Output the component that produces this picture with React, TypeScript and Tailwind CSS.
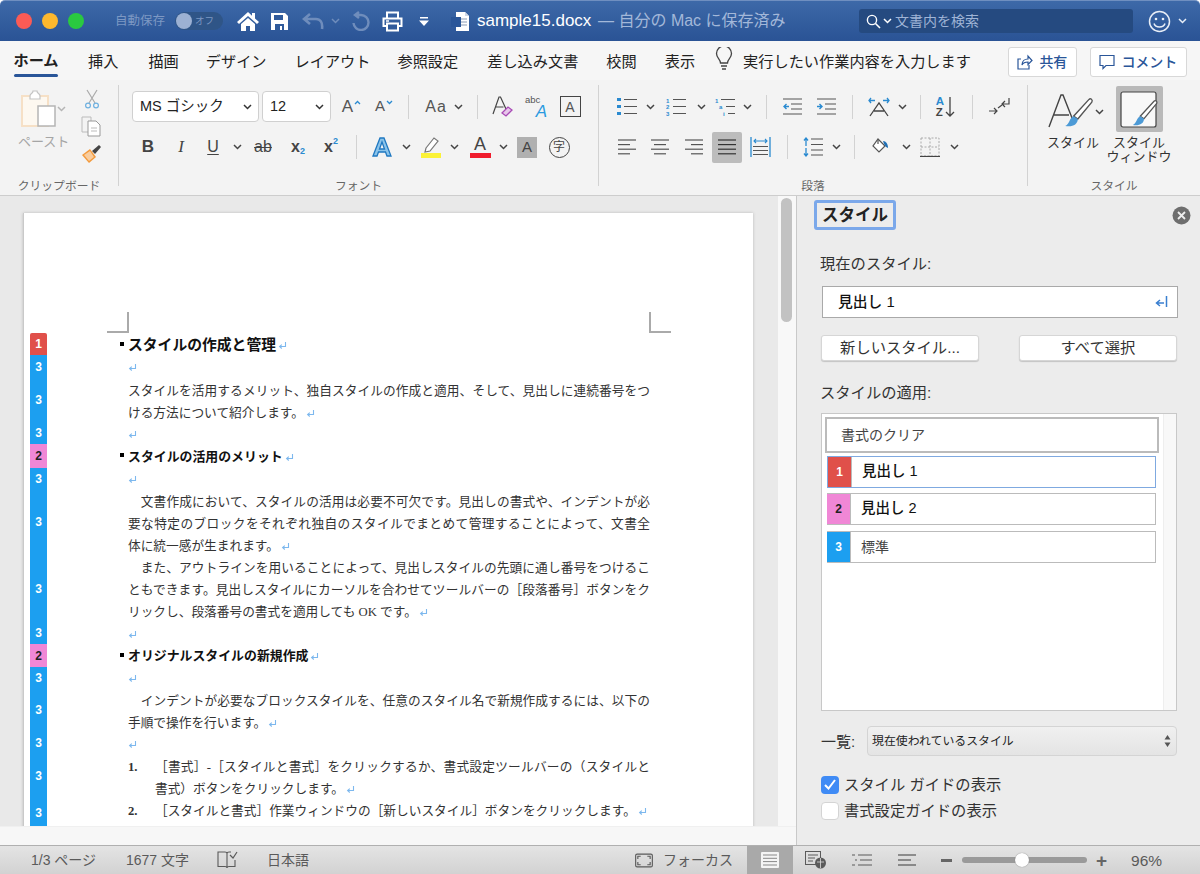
import React from 'react';

const Chev = ({ c = '#444' }: { c?: string }) => (
  <svg width="9" height="6" viewBox="0 0 9 6" className="shrink-0">
    <path d="M1 1l3.5 3.5L8 1" stroke={c} strokeWidth="1.5" fill="none" />
  </svg>
);

// horizontal rule icon used by the list and align buttons
const Lines = ({ rows, w = 20, h = 18, c = '#555' }: { rows: [number, number, number][]; w?: number; h?: number; c?: string }) => (
  <svg width={w} height={h} viewBox={`0 0 ${w} ${h}`} className="shrink-0">
    {rows.map((r, i) => (
      <path key={i} d={`M${r[0]} ${r[2]}H${r[1]}`} stroke={c} strokeWidth="1.2" />
    ))}
  </svg>
);

const Slot = ({ className, children }: { className: string; children?: React.ReactNode }) => (
  <div className={`flex shrink-0 items-center justify-center ${className}`}>{children}</div>
);

const VLine = ({ className = 'h-[24px]' }: { className?: string }) => <div className={`w-px bg-[#d2d2d2] ${className}`} />;

const Brush = ({ x = 0, y = 0, s = 1 }: { x?: number; y?: number; s?: number }) => (
  <g transform={`translate(${x} ${y}) scale(${s})`}>
    <path d="M20 1c1-1 3 0 2 2L12 15l-3-2z" fill="#fff" stroke="#555" strokeWidth="1" />
    <path d="M9 13l3 2c0 4-4 6-9 5 3-1 3-6 6-7z" fill="#4c9ad6" />
  </g>
);

const Mark = ({ c = '#7db8ee', className = 'ml-[2px]' }: { c?: string; className?: string }) => (
  <svg width="9" height="9" viewBox="0 0 9 9" className={`inline-block align-[-1px] ${className}`}>
    <path d="M7.5 1v4.5H2M3.8 3.6L1.6 5.5l2.2 2" stroke={c} strokeWidth="1.1" fill="none" />
  </svg>
);

const Caret = ({ down }: { down?: boolean }) => (
  <svg width="7" height="5" viewBox="0 0 7 5" className="mb-[9px] ml-px shrink-0">
    <path d={down ? 'M1 1l2.500 2.500L6 1' : 'M1 4l2.500-2.500L6 4'} stroke="#2a8ad0" strokeWidth="1.300" fill="none" />
  </svg>
);

const TitleBar = () => (
  <div className="flex h-[41px] shrink-0 items-center rounded-t-[5px] border-t border-[#6f8fc0] bg-gradient-to-b from-[#3d69a8] to-[#2a5395] text-white">
    <div className="ml-[16px] h-[16px] w-[16px] rounded-full bg-[#fb5b55]" />
    <div className="ml-[10px] h-[16px] w-[16px] rounded-full bg-[#fdb82e]" />
    <div className="ml-[10px] h-[16px] w-[16px] rounded-full bg-[#2ac940]" />
    <span className="ml-[31px] w-[60px] text-[12.5px] text-[#7d98c3]">自動保存</span>
    <div className="flex h-[18px] w-[48px] items-center rounded-full bg-[#2f5587] pl-px">
      <div className="h-[16px] w-[16px] rounded-full bg-[#9cb1d3]" />
      <span className="ml-[3px] text-[9.5px] text-[#7d98c3]">オフ</span>
    </div>
    <Slot className="ml-[14px] w-[22px]">
      <svg width="22" height="20" viewBox="0 0 22 20">
        <path d="M11 1L0 11l2 2 9-8 9 8 2-2-4-3.6V2h-3v2.7z" fill="#fff" />
        <path d="M4 13l7-6 7 6v7h-5v-5H9v5H4z" fill="#fff" />
      </svg>
    </Slot>
    <Slot className="ml-[11px] w-[19px]">
      <svg width="19" height="19" viewBox="0 0 19 19">
        <path d="M1 1h14l3 3v14H1z" fill="#fff" />
        <path d="M4 3h9v5H4z" fill="#2f5a9b" />
        <path d="M5 12h9v6H5z" fill="#2f5a9b" />
        <path d="M10 14h2v4h-2z" fill="#fff" />
      </svg>
    </Slot>
    <Slot className="ml-[13px] w-[23px]">
      <svg width="23" height="19" viewBox="0 0 23 19">
        <path d="M8 2L2 7l6 5M2 7h12c4 0 7 3 6 10" stroke="#6f8dbc" strokeWidth="2.6" fill="none" />
      </svg>
    </Slot>
    <Slot className="ml-[5px] w-[10px]">
      <Chev c="#6f8dbc" />
    </Slot>
    <Slot className="ml-[11px] w-[20px]">
      <svg width="20" height="20" viewBox="0 0 20 20">
        <path d="M8 1l-4 3 4 3M5 4h5a7.5 7.5 0 1 1-7.5 8" stroke="#6f8dbc" strokeWidth="2.4" fill="none" />
      </svg>
    </Slot>
    <Slot className="ml-[11px] w-[21px]">
      <svg width="21" height="21" viewBox="0 0 21 21">
        <path d="M5 7V1.5h11V7M5 15H1.5V7.5h18V15H16" stroke="#fff" strokeWidth="2" fill="none" />
        <path d="M5 12.5h11v7H5z" stroke="#fff" strokeWidth="2" fill="#2f5a9b" />
        <path d="M4 10h3" stroke="#fff" strokeWidth="1.5" />
      </svg>
    </Slot>
    <Slot className="ml-[16px] w-[10px]">
      <svg width="10" height="9" viewBox="0 0 10 9">
        <path d="M1 0h8v1.6H1zM0 3.5h10L5 9z" fill="#fff" />
      </svg>
    </Slot>
    <Slot className="ml-[22px] w-[19px]">
      <svg width="19" height="21" viewBox="0 0 19 21">
        <path d="M5 1h9l4 4v15H5z" fill="#fff" />
        <path d="M14 1v4h4" fill="#cfd8e6" />
        <path d="M10 8h6M10 11h6M10 14h6" stroke="#8a9bb5" strokeWidth="1" />
        <path d="M0 6h10v10H0z" fill="#2a5699" />
      </svg>
    </Slot>
    <span className="ml-[7px] w-[121px] text-[17px] text-white">sample15.docx</span>
    <span className="w-[261px] text-[16px] text-[#a3b8d9]">— 自分の Mac に保存済み</span>
    <div className="flex h-[24px] w-[274px] items-center rounded-[3px] bg-[#254a80] pl-[7px]">
      <svg width="15" height="15" viewBox="0 0 15 15">
        <circle cx="6" cy="6" r="4.6" stroke="#fff" strokeWidth="1.4" fill="none" />
        <path d="M9.5 9.5L14 14" stroke="#fff" strokeWidth="1.6" />
      </svg>
      <div className="ml-[2px]">
        <Chev c="#fff" />
      </div>
      <span className="ml-[3px] text-[14px] text-[#9fb4d6]">文書内を検索</span>
    </div>
    <Slot className="ml-[15px] w-[23px]">
      <svg width="23" height="23" viewBox="0 0 23 23">
        <circle cx="11.5" cy="11.5" r="10" stroke="#e8eef7" strokeWidth="1.5" fill="none" />
        <circle cx="8" cy="9" r="1.3" fill="#e8eef7" />
        <circle cx="15" cy="9" r="1.3" fill="#e8eef7" />
        <path d="M6 13.5c1.5 4.5 9.5 4.5 11 0" stroke="#e8eef7" strokeWidth="1.5" fill="none" />
      </svg>
    </Slot>
    <Slot className="ml-[6px] w-[10px]">
      <Chev c="#e8eef7" />
    </Slot>
  </div>
);

const tabs: [string, string][] = [
  ['挿入', 'ml-[30px]'],
  ['描画', 'ml-[30px]'],
  ['デザイン', 'ml-[27px]'],
  ['レイアウト', 'ml-[28px]'],
  ['参照設定', 'ml-[27px]'],
  ['差し込み文書', 'ml-[29px]'],
  ['校閲', 'ml-[28px]'],
  ['表示', 'ml-[28px]'],
];

const TabRow = () => (
  <div className="flex h-[39px] shrink-0 items-start bg-[#f6f6f6] text-[15.2px] text-[#222]">
    <div className="ml-[14px] flex h-[36px] w-[44px] flex-col items-center justify-between pt-[10px] font-bold">
      <span className="leading-[20px] whitespace-nowrap">ホーム</span>
      <div className="h-[3px] w-[44px] rounded-full bg-[#2a5699]" />
    </div>
    {tabs.map(([t, ml]) => (
      <span key={t} className={`${ml} pt-[11px] leading-[20px] whitespace-nowrap`}>
        {t}
      </span>
    ))}
    <Slot className="ml-[20px] mt-[6px] w-[18px]">
      <svg width="18" height="24" viewBox="0 0 18 24">
        <path d="M5.5 16c0-4-4-5-4-9.500a7.500 7.500 0 0 1 15 0c0 4.500-4 5.500-4 9.500zM6 19h6M7 22h4" stroke="#444" strokeWidth="1.300" fill="none" />
      </svg>
    </Slot>
    <span className="ml-[10px] pt-[11px] leading-[20px] whitespace-nowrap">実行したい作業内容を入力します</span>
    <div className="ml-[37px] mt-[6px] flex h-[30px] w-[69px] items-center justify-center gap-[6px] rounded-[3px] border border-[#d8d8d8] bg-white text-[14px] font-medium text-[#2a5699]">
      <svg width="16" height="16" viewBox="0 0 16 16">
        <path d="M4 5H1v10h11v-4" stroke="#2a5699" strokeWidth="1.200" fill="none" />
        <path d="M5 11c0-4 3-6 6-6V2l4 4.500-4 4V8c-3 0-5 1-6 3z" stroke="#2a5699" strokeWidth="1.200" fill="none" />
      </svg>
      共有
    </div>
    <div className="ml-[13px] mt-[6px] flex h-[30px] w-[97px] items-center justify-center gap-[6px] rounded-[3px] border border-[#d8d8d8] bg-white text-[14px] font-medium text-[#2a5699]">
      <svg width="16" height="16" viewBox="0 0 16 16">
        <path d="M1 1.500h14v10H7l-3 3v-3H1z" stroke="#2a5699" strokeWidth="1.200" fill="none" />
      </svg>
      コメント
    </div>
  </div>
);

const Group = ({ className, label, children }: { className: string; label: string; children: React.ReactNode }) => (
  <div className={`mt-[5px] flex h-[101px] shrink-0 flex-col ${className}`}>
    <div className="h-[93px] shrink-0">{children}</div>
    <div className="h-[14px] shrink-0 pt-px text-center text-[11.800px] leading-[14px] text-[#666]">{label}</div>
  </div>
);

const FontSelect = ({ text, className }: { text: string; className: string }) => (
  <div className={`flex h-[31px] items-center justify-between rounded-[4px] border border-[#d0d0d0] bg-white pl-[7px] pr-[6px] text-[14.5px] text-[#222] ${className}`}>
    <span>{text}</span>
    <Chev c="#333" />
  </div>
);

const Clipboard = () => (
  <Group className="w-[119px] border-r border-[#d2d2d2]" label="クリップボード">
    <div className="flex pl-[20px] pt-[5px]">
      <div className="flex w-[56px] flex-col">
        <div className="flex items-center">
          <svg width="37" height="38" viewBox="0 0 37 38">
            <path d="M2 6h26v30H2z" fill="#fdf8f0" stroke="#f6e0c6" strokeWidth="2" />
            <path d="M10 6c0-3 3-2 3-5h4c0 3 3 2 3 5v3H10z" fill="#fff" stroke="#c4c4c4" strokeWidth="1.200" />
            <path d="M18 16h17v20H18z" fill="#fff" stroke="#b5b5b5" strokeWidth="1.500" />
          </svg>
          <Chev c="#b5b5b5" />
        </div>
        <span className="ml-[-2px] mt-[7px] text-[13px] leading-[14px] text-[#a5a5a5] whitespace-nowrap">ペースト</span>
      </div>
      <div className="ml-[5px] mt-[-1px] flex flex-col items-center gap-[7px]">
        <svg width="14" height="20" viewBox="0 0 14 20">
          <path d="M2 1l8 13M12 1L4 14" stroke="#aaa" strokeWidth="1.200" />
          <circle cx="3" cy="16.500" r="2.400" stroke="#6fb1e0" fill="none" strokeWidth="1.200" />
          <circle cx="11" cy="16.500" r="2.400" stroke="#6fb1e0" fill="none" strokeWidth="1.200" />
        </svg>
        <svg width="21" height="21" viewBox="0 0 21 21">
          <path d="M1 1h9v15H1z" stroke="#bbb" fill="none" />
          <path d="M7 5h8l4 4v11H7z" stroke="#999" fill="#fff" />
          <path d="M10 12h6M10 15h6" stroke="#bbb" />
        </svg>
        <svg width="21" height="20" viewBox="0 0 21 20">
          <path d="M1 11l8-6 6 8-7 6z" fill="#f39a3c" />
          <path d="M3 11l6-4 4 6-5 4z" fill="#fff" opacity="0.500" />
          <path d="M11 7l7-6 2 2-6 7z" fill="#444" />
        </svg>
      </div>
    </div>
  </Group>
);

const FontGroup = () => (
  <Group className="w-[480px] border-r border-[#d2d2d2]" label="フォント">
    <div className="mt-[6px] flex h-[31px] items-center pl-[13px] text-[#555]">
      <FontSelect text="MS ゴシック" className="w-[127px]" />
      <FontSelect text="12" className="ml-[3px] w-[69px]" />
      <Slot className="w-[41px] text-[17px]">
        A
        <Caret />
      </Slot>
      <Slot className="w-[24px] text-[15px]">
        A
        <Caret down />
      </Slot>
      <Slot className="w-[24px]">
        <VLine />
      </Slot>
      <Slot className="w-[32px] text-[16px] tracking-[1px]">Aa</Slot>
      <Slot className="w-[12px]">
        <Chev />
      </Slot>
      <Slot className="w-[26px]">
        <VLine />
      </Slot>
      <Slot className="w-[24px]">
        <svg width="21" height="21" viewBox="0 0 21 21">
          <path d="M1 18L7 1h1.500L14 13M3.500 11h8" stroke="#444" strokeWidth="1.200" fill="none" />
          <path d="M10 17l6-6 4 3-6 6z" fill="#e7c6ea" stroke="#a84ab5" strokeWidth="1.300" />
        </svg>
      </Slot>
      <Slot className="w-[44px]">
        <div className="flex h-[24px] w-[22px] flex-col">
          <span className="self-start text-[9.5px] leading-[10px] text-[#555]">abc</span>
          <span className="self-end text-[17px] italic leading-[14px] text-[#2a9ae0]">A</span>
        </div>
      </Slot>
      <Slot className="w-[24px]">
        <div className="flex h-[21px] w-[21px] items-center justify-center border border-[#444] text-[14px] leading-none">A</div>
      </Slot>
    </div>
    <div className="mt-[10px] flex h-[30px] items-center pl-[13px] text-[#444]">
      <Slot className="w-[32px] text-[17px] font-bold">B</Slot>
      <Slot className="w-[34px] font-['Liberation_Serif',serif] text-[17px] italic">I</Slot>
      <Slot className="w-[30px] text-[16px] underline underline-offset-2">U</Slot>
      <Slot className="w-[18px]">
        <Chev />
      </Slot>
      <Slot className="w-[34px] text-[16px] line-through">ab</Slot>
      <Slot className="w-[36px] text-[16px] font-semibold">
        x<span className="mt-[10px] text-[9px] text-[#2a8ad0]">2</span>
      </Slot>
      <Slot className="w-[30px] text-[16px] font-semibold">
        x<span className="mb-[10px] text-[9px] text-[#2a8ad0]">2</span>
      </Slot>
      <Slot className="w-[20px]">
        <VLine />
      </Slot>
      <Slot className="w-[32px]">
        <svg width="20" height="20" viewBox="0 0 20 20">
          <path d="M1 19L8 1h4l7 18h-4l-1.500-4h-7L5 19zM7.500 12h5L10 5z" fill="#8cc4ea" stroke="#1f78c1" strokeWidth="1.300" />
        </svg>
      </Slot>
      <Slot className="w-[16px]">
        <Chev />
      </Slot>
      <Slot className="w-[34px]">
        <svg width="22" height="22" viewBox="0 0 22 22">
          <path d="M6 12L14 2l4 3-8 10-5 1z" fill="#fff" stroke="#777" strokeWidth="1.200" />
          <path d="M1 17h20v5H1z" fill="#fbf236" />
        </svg>
      </Slot>
      <Slot className="w-[12px]">
        <Chev />
      </Slot>
      <Slot className="w-[40px]">
        <div className="flex flex-col items-center">
          <span className="text-[18px] leading-[17px]">A</span>
          <div className="h-[5px] w-[21px] bg-[#f01c2c]" />
        </div>
      </Slot>
      <Slot className="w-[6px]">
        <Chev />
      </Slot>
      <Slot className="w-[42px]">
        <div className="flex h-[21px] w-[20px] items-center justify-center bg-[#b0b0b0] text-[15px]">A</div>
      </Slot>
      <Slot className="w-[22px]">
        <div className="flex h-[21px] w-[21px] items-center justify-center rounded-full border border-[#444] text-[12px]">字</div>
      </Slot>
    </div>
  </Group>
);

const al = (a: number[], b: number[]): [number, number, number][] => a.map((x, i) => [x, b[i], 2 + i * 4.6]);

const DotList = ({ kind }: { kind: 'bullet' | 'num' | 'multi' }) => (
  <svg width="20" height="19" viewBox="0 0 20 19">
    {kind === 'bullet' && (
      <>
        <path d="M0 1h4v3H0zM0 8h4v3H0zM0 15h4v3H0z" fill="#2a8ad0" />
        <path d="M7 2.500h13M7 9.500h13M7 16.500h13" stroke="#555" strokeWidth="1.200" />
      </>
    )}
    {kind === 'num' && (
      <>
        <text x="0" y="5.500" fontSize="6" fontWeight="700" fill="#2a8ad0">1</text>
        <text x="0" y="12" fontSize="6" fontWeight="700" fill="#2a8ad0">2</text>
        <text x="0" y="18.500" fontSize="6" fontWeight="700" fill="#2a8ad0">3</text>
        <path d="M7 2.500h13M7 9.500h13M7 16.500h13" stroke="#555" strokeWidth="1.200" />
      </>
    )}
    {kind === 'multi' && (
      <>
        <text x="0" y="5.500" fontSize="6" fontWeight="700" fill="#2a8ad0">1</text>
        <text x="4" y="12" fontSize="6" fontWeight="700" fill="#2a8ad0">a</text>
        <text x="8" y="18.500" fontSize="6" fontWeight="700" fill="#2a8ad0">i</text>
        <path d="M6 2.500h14M11 9.500h9M13 16.500h7" stroke="#555" strokeWidth="1.200" />
      </>
    )}
  </svg>
);

const Indent = ({ out }: { out?: boolean }) => (
  <svg width="19" height="17" viewBox="0 0 19 17">
    <path d="M0 1h19M0 16h19M8 6h11M8 11h11" stroke="#555" strokeWidth="1.200" />
    <path d={out ? 'M6 8.500H1M3.500 6L1 8.500 3.500 11' : 'M0 8.500h5M2.500 6L5 8.500 2.500 11'} stroke="#2a8ad0" strokeWidth="1.400" fill="none" />
  </svg>
);

const Paragraph = () => (
  <Group className="w-[429px] border-r border-[#d2d2d2]" label="段落">
    <div className="mt-[6px] flex h-[31px] items-center pl-[16px]">
      <Slot className="w-[24px]">
        <DotList kind="bullet" />
      </Slot>
      <Slot className="w-[22px]">
        <Chev />
      </Slot>
      <Slot className="w-[30px]">
        <DotList kind="num" />
      </Slot>
      <Slot className="w-[20px]">
        <Chev />
      </Slot>
      <Slot className="w-[28px]">
        <DotList kind="multi" />
      </Slot>
      <Slot className="w-[16px]">
        <Chev />
      </Slot>
      <Slot className="w-[22px]">
        <VLine />
      </Slot>
      <Slot className="w-[30px]">
        <Indent out />
      </Slot>
      <Slot className="w-[38px]">
        <Indent />
      </Slot>
      <Slot className="w-[15px]">
        <VLine />
      </Slot>
      <Slot className="w-[38px]">
        <svg width="22" height="20" viewBox="0 0 22 20">
          <path d="M2 19L11 6l9 13M6 14h10" stroke="#444" strokeWidth="1.300" fill="none" />
          <path d="M1 3.500h6M3 1L1 3.500 3 6M21 3.500h-6M19 1l2 2.500L19 6" stroke="#2a8ad0" strokeWidth="1.300" fill="none" />
        </svg>
      </Slot>
      <Slot className="w-[8px]">
        <Chev />
      </Slot>
      <Slot className="w-[28px]">
        <VLine />
      </Slot>
      <Slot className="w-[24px]">
        <div className="flex items-center">
          <div className="flex flex-col text-[11.5px] font-bold leading-[11px]">
            <span className="text-[#2a8ad0]">A</span>
            <span className="text-[#444]">Z</span>
          </div>
          <svg width="12" height="22" viewBox="0 0 12 22">
            <path d="M6 1v19M2 16l4 4 4-4" stroke="#444" strokeWidth="1.300" fill="none" />
          </svg>
        </div>
      </Slot>
      <Slot className="w-[28px]">
        <VLine />
      </Slot>
      <Slot className="w-[26px]">
        <svg width="22" height="19" viewBox="0 0 22 19">
          <path d="M21 1v6h-7M17 4l-3 3 3 3" stroke="#444" strokeWidth="1.200" fill="none" />
          <path d="M1 14h8M6 11l3 3-3 3" stroke="#444" strokeWidth="1.200" fill="none" />
          <path d="M10 11l4-3" stroke="#444" strokeWidth="1.200" />
        </svg>
      </Slot>
    </div>
    <div className="mt-[10px] flex h-[30px] items-center pl-[16px]">
      <Slot className="w-[24px]">
        <Lines w={18} rows={al([0, 0, 0, 0], [18, 12, 18, 12])} />
      </Slot>
      <Slot className="w-[42px]">
        <Lines w={18} rows={al([0, 3, 0, 3], [18, 15, 18, 15])} />
      </Slot>
      <Slot className="w-[26px]">
        <Lines w={18} rows={al([0, 6, 0, 6], [18, 18, 18, 18])} />
      </Slot>
      <Slot className="ml-[5px] h-[31px] w-[30px] rounded-[2px] bg-[#bcbcbc]">
        <Lines w={18} c="#333" rows={al([0, 0, 0, 0], [18, 18, 18, 18])} />
      </Slot>
      <Slot className="ml-[8px] w-[21px]">
        <svg width="21" height="22" viewBox="0 0 21 22">
          <path d="M1 1v20M20 1v20" stroke="#2a8ad0" strokeWidth="1.300" />
          <path d="M4 5h13M6 3L4 5l2 2M15 3l2 2-2 2" stroke="#2a8ad0" strokeWidth="1.100" fill="none" />
          <path d="M3 10.500h15M3 14.500h15M3 18.500h15" stroke="#555" strokeWidth="1.200" />
        </svg>
      </Slot>
      <Slot className="w-[32px]">
        <VLine />
      </Slot>
      <Slot className="w-[20px]">
        <svg width="20" height="20" viewBox="0 0 20 20">
          <path d="M3 1v8M1 3.500L3 1l2 2.500M3 11v8M1 16.500L3 19l2-2.500" stroke="#2a8ad0" strokeWidth="1.300" fill="none" />
          <path d="M8 2h12M8 7.500h12M8 13h12M8 18h12" stroke="#555" strokeWidth="1.200" />
        </svg>
      </Slot>
      <Slot className="w-[26px]">
        <Chev />
      </Slot>
      <Slot className="w-[10px]">
        <VLine />
      </Slot>
      <Slot className="w-[44px]">
        <svg width="20" height="20" viewBox="0 0 20 20">
          <path d="M7 2l7 7-6 6-6-6z" fill="#fff" stroke="#555" strokeWidth="1.200" />
          <path d="M7 2v5" stroke="#555" strokeWidth="1.200" />
          <path d="M12 4c3 0 5 3 5 7-3-1-4-4-5-7z" fill="#1f6fb5" />
        </svg>
      </Slot>
      <Slot className="w-[6px]">
        <Chev />
      </Slot>
      <Slot className="w-[42px]">
        <svg width="20" height="20" viewBox="0 0 20 20">
          <path d="M1 1h18v18H1zM10 1v18M1 10h18" stroke="#aaa" strokeDasharray="2 1.500" fill="none" />
          <path d="M0 19.500h20" stroke="#444" strokeWidth="1.200" />
        </svg>
      </Slot>
      <Slot className="w-[6px]">
        <Chev />
      </Slot>
    </div>
  </Group>
);

const StyleGroup = () => (
  <Group className="w-[172px]" label="スタイル">
    <div className="flex text-[13px] leading-[14px] text-[#333]">
      <div className="ml-[10px] flex w-[70px] flex-col items-center">
        <div className="flex h-[48px] items-center pt-[6px] pl-[6px]">
          <svg width="46" height="36" viewBox="0 0 46 36">
            <path d="M1 33L13 1h2l11 28M6 21h15" stroke="#444" strokeWidth="1.400" fill="none" />
            <Brush x={13} y={4} s={1.400} />
          </svg>
          <div className="ml-px">
            <Chev />
          </div>
        </div>
        <span className="mt-[3px] whitespace-nowrap">スタイル</span>
      </div>
      <div className="flex w-[62px] flex-col items-center">
        <div className="mt-px flex h-[46px] w-[47px] items-center justify-center rounded-[2px] bg-[#b9b9b9]">
          <svg width="38" height="37" viewBox="0 0 38 37">
            <rect x="1" y="1" width="35" height="35" rx="2" fill="#f8f8f8" stroke="#444" strokeWidth="1.200" />
            <Brush x={9} y={9} s={1.250} />
          </svg>
        </div>
        <span className="mt-[4px] whitespace-nowrap">スタイル</span>
        <span className="whitespace-nowrap">ウィンドウ</span>
      </div>
    </div>
  </Group>
);

const tagStyles: Record<number, string> = {
  1: 'bg-[#e0504a] text-white',
  2: 'bg-[#f087d6] text-[#222]',
  3: 'bg-[#1c9ff0] text-white',
};

const Tag = ({ n, className }: { n: number; className: string }) => (
  <div className={`flex w-[17px] shrink-0 items-center justify-center font-['Liberation_Sans',sans-serif] text-[12px] font-bold ${tagStyles[n]} ${className}`}>
    {n}
  </div>
);

const Full = ({ children }: { children: React.ReactNode }) => (
  <div className="whitespace-nowrap [text-align-last:justify]">{children}</div>
);

const Last = ({ children }: { children: React.ReactNode }) => (
  <div className="whitespace-nowrap">
    {children}
    <Mark />
  </div>
);

const Blank = () => (
  <div className="flex h-full items-center">
    <Mark className="" />
  </div>
);

const H1 = ({ text, className }: { text: string; className: string }) => (
  <div className={`relative flex h-full items-center whitespace-nowrap font-bold text-[#111] ${className}`}>
    <div className="absolute left-[-8px] top-[7px] h-[4px] w-[4px] bg-black" />
    {text}
    <Mark />
  </div>
);

const rows: { n: number; h: string; body: React.ReactNode }[] = [
  { n: 1, h: 'h-[22px] rounded-t-[2px]', body: <H1 text="スタイルの作成と管理" className="text-[14.800px]" /> },
  { n: 3, h: 'h-[23px]', body: <Blank /> },
  {
    n: 3,
    h: 'h-[44px]',
    body: (
      <>
        <Full>スタイルを活用するメリット、独自スタイルの作成と適用、そして、見出しに連続番号をつ</Full>
        <Last>ける方法について紹介します。</Last>
      </>
    ),
  },
  { n: 3, h: 'h-[22px]', body: <Blank /> },
  { n: 2, h: 'h-[24px]', body: <H1 text="スタイルの活用のメリット" className="text-[12.900px]" /> },
  { n: 3, h: 'h-[21px]', body: <Blank /> },
  {
    n: 3,
    h: 'h-[66px]',
    body: (
      <>
        <Full>　文書作成において、スタイルの活用は必要不可欠です。見出しの書式や、インデントが必</Full>
        <Full>要な特定のブロックをそれぞれ独自のスタイルでまとめて管理することによって、文書全</Full>
        <Last>体に統一感が生まれます。</Last>
      </>
    ),
  },
  {
    n: 3,
    h: 'h-[67px]',
    body: (
      <>
        <Full>　また、アウトラインを用いることによって、見出しスタイルの先頭に通し番号をつけるこ</Full>
        <Full>ともできます。見出しスタイルにカーソルを合わせてツールバーの［段落番号］ボタンをク</Full>
        <Last>リックし、段落番号の書式を適用しても OK です。</Last>
      </>
    ),
  },
  { n: 3, h: 'h-[22px]', body: <Blank /> },
  { n: 2, h: 'h-[23px]', body: <H1 text="オリジナルスタイルの新規作成" className="text-[12.900px]" /> },
  { n: 3, h: 'h-[21px]', body: <Blank /> },
  {
    n: 3,
    h: 'h-[44px]',
    body: (
      <>
        <Full>　インデントが必要なブロックスタイルを、任意のスタイル名で新規作成するには、以下の</Full>
        <Last>手順で操作を行います。</Last>
      </>
    ),
  },
  { n: 3, h: 'h-[22px]', body: <Blank /> },
  {
    n: 3,
    h: 'h-[44px]',
    body: (
      <>
        <div className="flex whitespace-nowrap">
          <span className="w-[27px] font-semibold">1.</span>
          <div className="flex-1 [text-align-last:justify]">［書式］-［スタイルと書式］をクリックするか、書式設定ツールバーの（スタイルと</div>
        </div>
        <div className="pl-[27px]">
          <Last>書式）ボタンをクリックします。</Last>
        </div>
      </>
    ),
  },
  {
    n: 3,
    h: 'h-[30px]',
    body: (
      <div className="flex whitespace-nowrap">
        <span className="w-[27px] font-semibold">2.</span>
        <div className="flex-1">
          ［スタイルと書式］作業ウィンドウの［新しいスタイル］ボタンをクリックします。
          <Mark />
        </div>
      </div>
    ),
  },
];

const DocArea = () => (
  <div className="flex w-[796px] shrink-0 flex-col bg-[#f7f7f7]">
    <div className="flex h-[630px]">
      <div className="h-full w-[778px] overflow-hidden bg-[#e9e9e9] pl-[23px] pt-[17px]">
        <div className="h-[800px] w-[730px] border-l border-[#c9c9c9] bg-white shadow-[0_0_3px_#bbb]">
          <div className="flex h-[120px] items-end justify-between pl-[83px] pr-[82px]">
            <div className="h-[21px] w-[22px] border-b-2 border-r-2 border-[#aaa]" />
            <div className="h-[21px] w-[22px] border-b-2 border-l-2 border-[#aaa]" />
          </div>
          {rows.map((r, i) => (
            <div key={i} className={`flex ${r.h.split(' ')[0]}`}>
              <Tag n={r.n} className={`ml-[6px] ${r.h}`} />
              <div className="ml-[81px] w-[522px] pt-[2px] font-['Liberation_Serif','Noto_Sans_CJK_JP',serif] text-[12.700px] leading-[22.200px] text-[#333]">
                {r.body}
              </div>
            </div>
          ))}
        </div>
      </div>
      <div className="w-[18px] bg-[#f8f8f8] pl-[3px] pt-[2px]">
        <div className="h-[124px] w-[11px] rounded-full bg-[#c2c2c2]" />
      </div>
    </div>
    <div className="h-[19px] border-t border-[#f0f0f0] bg-[#f7f7f7]" />
  </div>
);

const StyleRow = ({ n, text, heading, active, className }: { n: number; text: string; heading?: boolean; active?: boolean; className: string }) => (
  <div className={`ml-[5px] flex h-[32px] w-[329px] border ${active ? 'border-[#7fa9e0]' : 'border-[#bbb] border-l-0'} bg-white ${className}`}>
    <Tag n={n} className="!w-[23px] h-full" />
    <div className={`flex flex-1 items-center border-l border-[#bbb] pl-[10px] ${heading ? 'text-[14.500px] font-medium text-[#111]' : 'text-[14px] text-[#444]'}`}>{text}</div>
  </div>
);

const Check = ({ on, text, className }: { on?: boolean; text: string; className: string }) => (
  <div className={`ml-[24px] flex h-[17px] items-center ${className}`}>
    <div className={`flex h-[18px] w-[18px] items-center justify-center rounded-[4px] ${on ? 'bg-[#3f8bf5]' : 'border border-[#d4d4d4] bg-white'}`}>
      {on && (
        <svg width="12" height="11" viewBox="0 0 12 11">
          <path d="M1 6l3.500 3.500L11 1" stroke="#fff" strokeWidth="2" fill="none" />
        </svg>
      )}
    </div>
    <span className="ml-[5px] pt-px text-[15.300px] text-[#333]">{text}</span>
  </div>
);

const StylePanel = () => (
  <div className="flex-1 border-l border-[#c9c9c9] bg-[#ececec] pt-[4px] text-[#333]">
    <div className="flex h-[30px] items-center justify-between pl-[17px] pr-[9px]">
      <div className="flex h-[30px] w-[82px] items-center justify-center rounded-[3px] border-[3px] border-[#7ba8ea] text-[16.500px] font-bold text-[#222]">スタイル</div>
      <svg width="19" height="19" viewBox="0 0 19 19">
        <circle cx="9.500" cy="9.500" r="9" fill="#6e6e6e" />
        <path d="M6 6l7 7M13 6l-7 7" stroke="#eee" strokeWidth="1.800" />
      </svg>
    </div>
    <div className="ml-[23px] mt-[24px] h-[20px] text-[15.300px] leading-[20px]">現在のスタイル:</div>
    <div className="ml-[25px] mt-[12px] flex h-[32px] w-[356px] items-center justify-between border border-[#a9a9a9] bg-white pl-[15px] pr-[9px] text-[14.800px] font-medium text-[#111]">
      見出し 1
      <svg width="13" height="13" viewBox="0 0 13 13">
        <path d="M11.500 0v11M9 7H2M5 4L1.500 7 5 10" stroke="#3a7fd0" strokeWidth="1.500" fill="none" />
      </svg>
    </div>
    <div className="ml-[24px] mt-[17px] flex h-[26px] gap-[40px] text-[15.300px]">
      <div className="flex w-[158px] items-center justify-center rounded-[3px] border border-[#d6d6d6] bg-white pt-px shadow-[0_1px_1px_#c4c4c4]">新しいスタイル...</div>
      <div className="flex w-[158px] items-center justify-center rounded-[3px] border border-[#d6d6d6] bg-white pt-px shadow-[0_1px_1px_#c4c4c4]">すべて選択</div>
    </div>
    <div className="ml-[23px] mt-[22px] h-[20px] text-[15.300px] leading-[20px]">スタイルの適用:</div>
    <div className="ml-[24px] mt-[10px] flex h-[298px] w-[356px] border border-[#c8c8c8] bg-white">
      <div className="w-[341px]">
        <div className="ml-[3px] mt-[3px] flex h-[36px] w-[334px] items-center border-2 border-[#bbb] pl-[14px] text-[14px] text-[#444]">書式のクリア</div>
        <StyleRow n={1} text="見出し 1" heading active className="mt-[3px]" />
        <StyleRow n={2} text="見出し 2" heading className="mt-[5px]" />
        <StyleRow n={3} text="標準" className="mt-[6px]" />
      </div>
      <div className="flex-1 border-l border-[#eee] bg-[#f8f8f8]" />
    </div>
    <div className="ml-[24px] mt-[15px] flex h-[30px] items-center">
      <span className="w-[46px] pt-[2px] text-[15px]">一覧:</span>
      <div className="flex h-[30px] w-[310px] items-center justify-between rounded-[4px] border border-[#d4d4d4] bg-gradient-to-b from-[#f0f0f0] to-[#e4e4e4] pl-[4px] pr-[5px] pt-[2px] text-[11.900px] text-[#222]">
        現在使われているスタイル
        <svg width="7" height="14" viewBox="0 0 7 14" className="mt-[-2px]">
          <path d="M3.500 1L6.500 5.500H.5zM3.500 13L.5 8.500h6z" fill="#555" />
        </svg>
      </div>
    </div>
    <Check on text="スタイル ガイドの表示" className="mt-[20px]" />
    <Check text="書式設定ガイドの表示" className="mt-[9px]" />
  </div>
);

const StatusBar = () => (
  <div className="flex h-[29px] shrink-0 items-center border-t border-[#b0b0b0] bg-gradient-to-b from-[#e4e4e4] to-[#d2d2d2] text-[14px] text-[#5a5a5a]">
    <span className="ml-[31px] w-[95px] whitespace-nowrap">1/3 ページ</span>
    <span className="w-[91px] whitespace-nowrap">1677 文字</span>
    <Slot className="w-[21px]">
      <svg width="21" height="19" viewBox="0 0 21 19">
        <path d="M1 1h7c1 0 2 .5 2 1.500V17c0-1-1-1.500-2-1.500H1zM10 2.500C10 1.500 11 1 12 1h2M10 17c0-1 1-1.500 2-1.500h6V9" stroke="#5a5a5a" strokeWidth="1.100" fill="none" />
        <path d="M13 4l3 3 4-6" stroke="#5a5a5a" strokeWidth="1.200" fill="none" />
      </svg>
    </Slot>
    <span className="ml-[29px] w-[42px] whitespace-nowrap">日本語</span>
    <Slot className="ml-[326px] w-[18px]">
      <svg width="19" height="15" viewBox="0 0 19 15">
        <rect x=".7" y=".7" width="17.600" height="13.600" rx="1.500" stroke="#5a5a5a" strokeWidth="1.200" fill="none" />
        <path d="M3 6V3h3M13 3h3v3M16 9v3h-3M6 12H3V9" stroke="#5a5a5a" strokeWidth="1.200" fill="none" />
      </svg>
    </Slot>
    <span className="ml-[10px] w-[84px] whitespace-nowrap">フォーカス</span>
    <Slot className="h-full w-[46px] bg-[#a9a9a9]">
      <svg width="18" height="16" viewBox="0 0 18 16">
        <rect width="18" height="16" rx="1" fill="#f4f4f4" />
        <path d="M2 3h14M2 6.300h14M2 9.600h14M2 13h14" stroke="#888" strokeWidth="1" />
      </svg>
    </Slot>
    <Slot className="ml-[12px] w-[22px]">
      <svg width="22" height="18" viewBox="0 0 22 18">
        <rect x=".5" y=".5" width="15" height="13" stroke="#5a5a5a" fill="none" />
        <path d="M3 4h10M3 7h7M3 10h5" stroke="#5a5a5a" />
        <circle cx="15.500" cy="12" r="5.500" fill="#5a5a5a" />
        <path d="M12 11h7M15.500 7v10" stroke="#ddd" strokeWidth=".8" />
      </svg>
    </Slot>
    <Slot className="ml-[25px] w-[20px]">
      <svg width="20" height="15" viewBox="0 0 20 15">
        <path d="M0 2h3M6 2h14M3 7h2M8 7h12M0 12h3M6 12h14" stroke="#5a5a5a" strokeWidth="1.200" />
      </svg>
    </Slot>
    <Slot className="ml-[25px] w-[20px]">
      <Lines w={20} h={15} rows={[[1, 19, 2], [1, 14, 7], [1, 19, 12]]} />
    </Slot>
    <div className="ml-[24px] h-[3px] w-[11px] bg-[#666]" />
    <div className="ml-[10px] flex h-[6px] w-[125px] items-center rounded-full bg-[#9a9a9a] pl-[53px]">
      <div className="h-[14px] w-[14px] shrink-0 rounded-full bg-white shadow-[0_0_1px_#666]" />
    </div>
    <span className="ml-[9px] text-[19px] font-bold leading-none text-[#666]">+</span>
    <span className="ml-[24px] pt-[2px] text-[15.500px]">96%</span>
  </div>
);

export default function App() {
  return (
    <div className="flex h-[874px] w-[1200px] flex-col overflow-hidden bg-white font-['Liberation_Sans','Noto_Sans_CJK_JP',sans-serif]">
      <TitleBar />
      <TabRow />
      <div className="flex h-[116px] shrink-0 border-b border-[#cdcdcd] bg-[#f3f3f3]">
        <Clipboard />
        <FontGroup />
        <Paragraph />
        <StyleGroup />
      </div>
      <div className="flex h-[649px] shrink-0">
        <DocArea />
        <StylePanel />
      </div>
      <StatusBar />
    </div>
  );
}
